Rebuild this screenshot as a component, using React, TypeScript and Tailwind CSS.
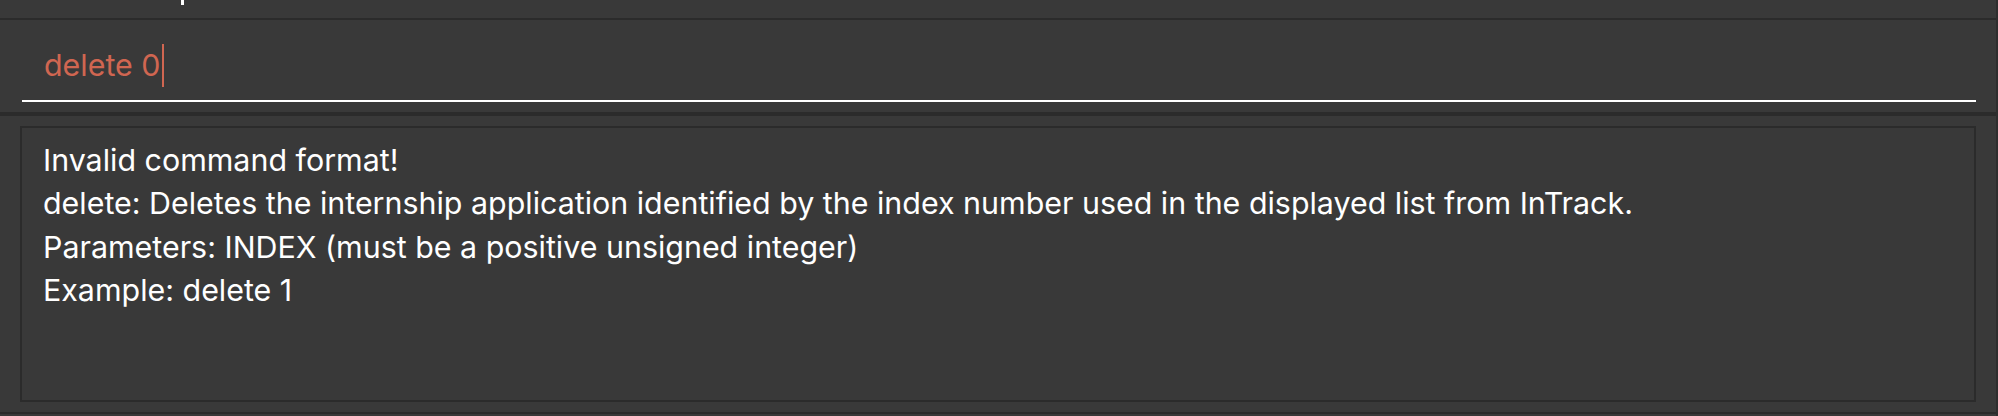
const lines = [
  'Invalid command format!',
  'delete: Deletes the internship application identified by the index number used in the displayed list from InTrack.',
  'Parameters: INDEX (must be a positive unsigned integer)',
  'Example: delete 1',
];

export default function App() {
  return (
    <div
      className="w-[1998px] h-[416px] bg-[#393939] flex overflow-hidden"
      style={{ fontFamily: 'Inter, "Noto Sans", sans-serif' }}
    >
      <div className="flex-1 flex flex-col border-r-2 border-[#2e2e2e]">
        {/* tail of the list panel above */}
        <div className="h-[18px] relative">
          <div className="absolute left-[181px] top-0 w-[3px] h-[5px] bg-white" />
        </div>
        <div className="h-[2px] bg-[#2b2b2b]" />

        {/* command box */}
        <div className="h-[92px] pl-[22px] pr-[20px]">
          <div className="h-[82px] border-b-2 border-white pt-[24px] pl-[22px]">
            <div className="flex items-start text-[30.4px] leading-[43px] text-[#d06651]">
              <span>delete 0</span>
              <span className="w-[2px] h-[43px] bg-[#d06651] ml-[1px]" />
            </div>
          </div>
        </div>
        <div className="h-[4px] bg-[#2b2b2b]" />

        {/* result display */}
        <div className="flex-1 pt-[10px] px-[20px] pb-[10px]">
          <div className="h-full border-2 border-[#2b2b2b] pt-[11px] pl-[21px]">
            {lines.map((line) => (
              <div key={line} className="text-[30.4px] leading-[43.4px] text-white whitespace-nowrap">
                {line}
              </div>
            ))}
          </div>
        </div>
        <div className="h-[2px] bg-[#2b2b2b]" />
        <div className="h-[2px]" />
      </div>
    </div>
  );
}
